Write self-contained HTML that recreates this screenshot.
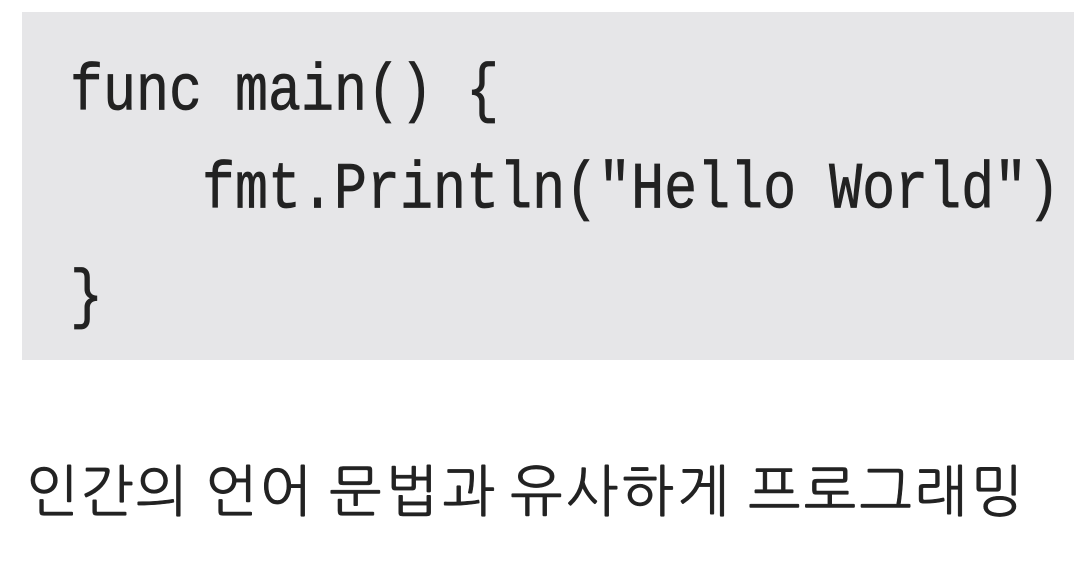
<!DOCTYPE html>
<html><head><meta charset="utf-8"><style>
html,body{margin:0;padding:0;background:#fff;width:1074px;height:568px;overflow:hidden;position:relative}
.code{position:absolute;left:22px;top:12px;width:1052px;height:348px;background:#e6e6e8}
.l{position:absolute;left:70px;font-family:"Liberation Mono","DejaVu Sans Mono",monospace;font-size:55px;color:#222;white-space:pre;transform:scaleY(1.2);transform-origin:0 100%;line-height:1;-webkit-text-stroke:0.6px #222}
.k{position:absolute;top:460px;font-family:"Liberation Sans","NanumGothic","Noto Sans CJK KR",sans-serif;font-size:56px;color:#222;white-space:nowrap;line-height:64px;-webkit-text-stroke:0.5px #222;letter-spacing:2px}
</style></head><body>
<div class="code"></div>
<div class="l" style="top:70px">func main() {</div>
<div class="l" style="top:168px">    fmt.Println("Hello World")</div>
<div class="l" style="top:276px">}</div>
<div class="k" style="left:26px">인간의</div>
<div class="k" style="left:205px">언어</div>
<div class="k" style="left:329px;letter-spacing:4px">문법과</div>
<div class="k" style="left:510px;letter-spacing:3px">유사하게</div>
<div class="k" style="left:748px;letter-spacing:3px">프로그래밍</div>
</body></html>
